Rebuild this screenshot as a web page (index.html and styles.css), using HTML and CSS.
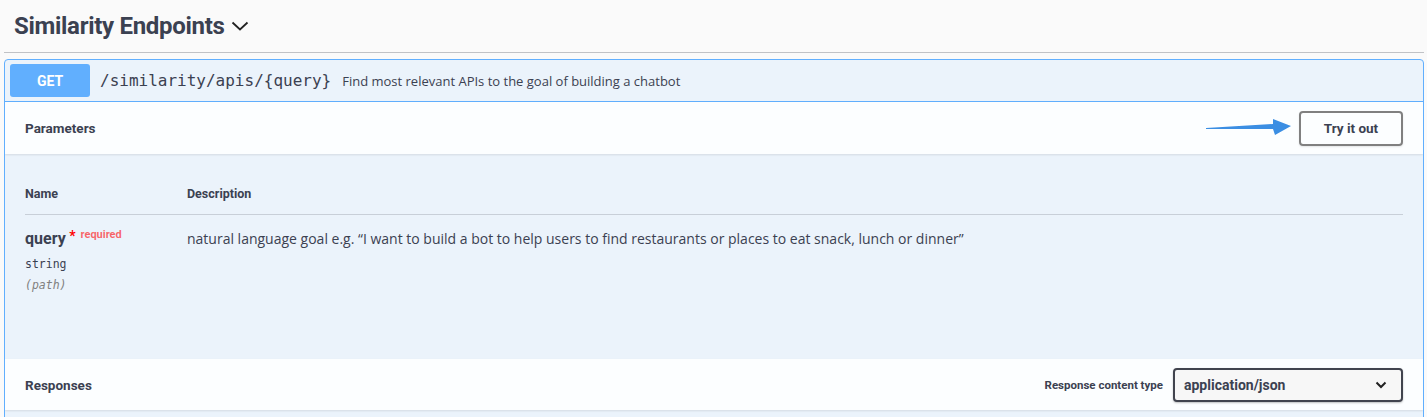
FILE: index.html
```html
<!DOCTYPE html>
<html>
<head>
<meta charset="utf-8">
<link rel="stylesheet" href="styles.css">
</head>
<body>
<div class="wrap">
  <h4 class="tag">
    <span class="tag-title">Similarity Endpoints</span>
    <svg class="tag-chevron" width="18" height="12" viewBox="0 0 18 12"><path d="M1.5 2.5 L9 9.5 L16.5 2.5" fill="none" stroke="#222" stroke-width="1.8"/></svg>
  </h4>
  <div class="opblock">
    <div class="summary">
      <span class="method">GET</span>
      <span class="path">/similarity/apis/{query}</span>
      <span class="summary-desc">Find most relevant APIs to the goal of building a chatbot</span>
    </div>
    <div class="section-header">
      <h4 class="section-title">Parameters</h4>
      <button class="try-btn">Try it out</button>
      <svg class="arrow" width="92" height="22" viewBox="0 0 92 22"><polygon points="2,11 69,7 69,2 87,9 71,18 69,12 2,12" fill="#3b8ee3"/></svg>
    </div>
    <div class="params">
      <div class="params-table">
        <div class="prow head">
          <div class="col-name">Name</div>
          <div class="col-desc">Description</div>
        </div>
        <div class="prow body">
          <div class="col-name">
            <div class="pname">query<span class="star">&nbsp;*</span><span class="req">required</span></div>
            <div class="ptype">string</div>
            <div class="pin">(path)</div>
          </div>
          <div class="col-desc pdesc">natural language goal e.g. “I want to build a bot to help users to find restaurants or places to eat snack, lunch or dinner”</div>
        </div>
      </div>
    </div>
    <div class="section-header resp">
      <h4 class="section-title">Responses</h4>
      <div class="ctype">
        <span class="ctype-label">Response content type</span>
        <div class="select">
          <span>application/json</span>
          <svg width="12" height="8" viewBox="0 0 12 8"><path d="M1.5 1.5 L6 6 L10.5 1.5" fill="none" stroke="#222" stroke-width="2"/></svg>
        </div>
      </div>
    </div>
    <div class="tail"></div>
  </div>
</div>
</body>
</html>
```
FILE: styles.css
```css
html, body {
  margin: 0;
  padding: 0;
  background: #fafafa;
}
body {
  font-family: "Open Sans", sans-serif;
  color: #3b4151;
  overflow: hidden;
}
.wrap {
  padding: 0 3px 0 4px;
}
.tag {
  margin: 0;
  height: 53px;
  box-sizing: border-box;
  border-bottom: 1px solid rgba(59,65,81,.3);
  display: flex;
  align-items: center;
  padding: 0 0 1px 10px;
  gap: 6px;
}
.tag-title {
  font-family: Roboto, sans-serif;
  font-size: 24px;
  font-weight: 700;
  letter-spacing: -0.3px;
  color: #3b4151;
}
.tag-chevron {
  margin-top: 1px;
}
.opblock {
  margin-top: 6px;
  border: 1px solid #61affe;
  border-radius: 4px;
  background: #ebf3fb;
  overflow: hidden;
}
.summary {
  display: flex;
  align-items: center;
  padding: 4px 5px;
  border-bottom: 1px solid #61affe;
}
.method {
  width: 80px;
  height: 33px;
  background: #61affe;
  border-radius: 3px;
  color: #fff;
  font-family: Roboto, sans-serif;
  font-weight: 700;
  font-size: 14px;
  display: flex;
  align-items: center;
  justify-content: center;
}
.path {
  margin-left: 10px;
  font-family: "DejaVu Sans Mono", monospace;
  font-size: 16px;
  color: #3b4151;
}
.summary-desc {
  margin-left: 11px;
  font-size: 13px;
  color: #3b4151;
}
.section-header {
  position: relative;
  height: 52px;
  box-sizing: border-box;
  background: rgba(255,255,255,.85);
  box-shadow: 0 1px 2px rgba(0,0,0,.1);
  display: flex;
  align-items: center;
  justify-content: space-between;
  padding: 0 20px;
}
.section-title {
  margin: 0;
  font-family: Roboto, sans-serif;
  font-size: 13.5px;
  font-weight: 700;
  color: #3b4151;
}
.try-btn {
  width: 104px;
  height: 35px;
  border: 2px solid #808080;
  border-radius: 4px;
  background: transparent;
  font-family: Roboto, sans-serif;
  font-size: 13.5px;
  font-weight: 700;
  color: #3b4151;
  box-shadow: 0 1px 2px rgba(0,0,0,.1);
  padding: 0;
}
.arrow {
  position: absolute;
  left: 1199px;
  top: 15px;
}
.params {
  height: 205px;
  box-sizing: border-box;
  padding: 20px 20px;
}
.params-table {
  display: flex;
  flex-direction: column;
}
.prow {
  display: flex;
}
.prow.head {
  height: 41px;
  align-items: flex-end;
  padding-bottom: 14px;
  box-sizing: border-box;
  border-bottom: 1px solid rgba(59,65,81,.2);
  font-family: Roboto, sans-serif;
  font-size: 12.5px;
  font-weight: 700;
}
.prow.head .col-name, .prow.head .col-desc {
  line-height: 1;
}
.col-name {
  width: 162px;
  flex: none;
}
.prow.body {
  padding-top: 13px;
}
.pname {
  font-family: Roboto, sans-serif;
  font-size: 16px;
  font-weight: 700;
  color: #3b4151;
  line-height: 22px;
}
.star {
  color: red;
  font-size: 14px;
  position: relative;
  top: -3px;
}
.req {
  color: rgba(255,0,0,.6);
  font-size: 11px;
  font-weight: 700;
  position: relative;
  top: -6px;
  margin-left: 5px;
}
.ptype {
  font-family: "DejaVu Sans Mono", monospace;
  font-size: 11.5px;
  line-height: 22px;
  padding-top: 1px;
}
.pin {
  font-family: "DejaVu Sans Mono", monospace;
  font-size: 11.5px;
  font-style: italic;
  color: gray;
  line-height: 20px;
}
.pdesc {
  font-size: 14px;
  line-height: 20px;
  padding-top: 1px;
}
.resp {
  height: 51px;
}
.ctype {
  display: flex;
  align-items: center;
  gap: 10px;
}
.ctype-label {
  font-family: Roboto, sans-serif;
  font-size: 11.5px;
  font-weight: 700;
  color: #3b4151;
}
.select {
  width: 230px;
  height: 34px;
  box-sizing: border-box;
  border: 2px solid #41444e;
  border-radius: 4px;
  background: #f7f7f7;
  box-shadow: 0 1px 2px rgba(0,0,0,.25);
  display: flex;
  align-items: center;
  justify-content: space-between;
  padding: 0 14px 0 9px;
  font-family: Roboto, sans-serif;
  font-size: 14px;
  font-weight: 700;
  color: #3b4151;
}
.tail {
  height: 20px;
}
```
